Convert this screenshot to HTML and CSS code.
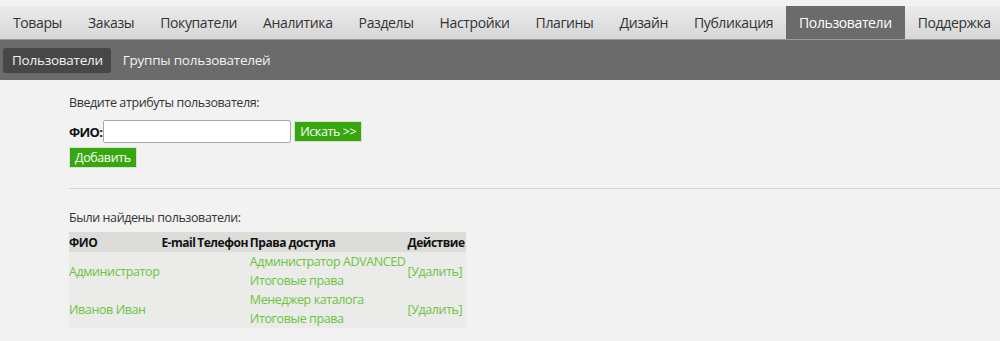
FILE: index.html
```html
<!DOCTYPE html>
<html lang="ru">
<head>
    <meta charset="UTF-8">
    <title>Пользователи</title>
    <link rel="stylesheet" href="styles.css">
</head>
<body>
    <div class="menu">
        <a class="menu-item">Товары</a>
        <a class="menu-item">Заказы</a>
        <a class="menu-item">Покупатели</a>
        <a class="menu-item">Аналитика</a>
        <a class="menu-item">Разделы</a>
        <a class="menu-item">Настройки</a>
        <a class="menu-item">Плагины</a>
        <a class="menu-item">Дизайн</a>
        <a class="menu-item">Публикация</a>
        <a class="menu-item active">Пользователи</a>
        <a class="menu-item">Поддержка</a>
    </div>
    <div class="submenu">
        <a class="submenu-item active">Пользователи</a>
        <a class="submenu-item">Группы пользователей</a>
    </div>

    <div class="content">
        <div class="search">
            <div class="hint">Введите атрибуты пользователя:</div>
            <div class="search-row">
                <label class="label">ФИО:</label>
                <input type="text" class="field">
                <button class="btn">Искать &gt;&gt;</button>
            </div>
            <button class="btn">Добавить</button>
        </div>

        <hr class="divider">

        <div class="hint">Были найдены пользователи:</div>
        <table class="users">
            <tr>
                <th class="col-name">ФИО</th>
                <th>E-mail</th>
                <th>Телефон</th>
                <th>Права доступа</th>
                <th>Действие</th>
            </tr>
            <tr>
                <td><a>Администратор</a></td>
                <td></td>
                <td></td>
                <td><a>Администратор ADVANCED</a><br><a>Итоговые права</a></td>
                <td><a>[Удалить]</a></td>
            </tr>
            <tr>
                <td><a>Иванов Иван</a></td>
                <td></td>
                <td></td>
                <td><a>Менеджер каталога</a><br><a>Итоговые права</a></td>
                <td><a>[Удалить]</a></td>
            </tr>
        </table>
    </div>
</body>
</html>
```
FILE: styles.css
```css
body {
    margin: 0;
    font-family: "Open Sans", "Noto Sans", sans-serif;
    background-color: #f3f2f2;
    color: #333;
    overflow: hidden;
}
.menu {
    display: flex;
    margin-top: 6px;
    height: 33px;
    background: linear-gradient(#ececec, #d6d6d6);
    border-bottom: 1px solid #9a9a9a;
    white-space: nowrap;
}
.menu-item {
    padding: 0 13px 0 13px;
    line-height: 33px;
    font-size: 14px;
    letter-spacing: -0.38px;
    color: #333;
    cursor: pointer;
}
.menu-item.active {
    background-color: #6b6b6b;
    color: #fff;
}
.submenu {
    display: flex;
    align-items: center;
    height: 40px;
    background-color: #6b6b6b;
    padding-left: 3px;
    gap: 3px;
}
.submenu-item {
    padding: 0 8px 0 9px;
    line-height: 25px;
    font-size: 13.5px;
    letter-spacing: -0.25px;
    color: #f2f2f2;
    border-radius: 3px;
    cursor: pointer;
}
.submenu-item.active {
    background-color: #474747;
}
.content {
    padding: 14px 0 0 69px;
    font-size: 12.5px;
    letter-spacing: -0.4px;
}
.hint {
    line-height: 18px;
}
.search-row {
    display: flex;
    align-items: center;
    margin-top: 8px;
}
.label {
    font-weight: bold;
    font-size: 13px;
    letter-spacing: -0.7px;
    color: #111;
    margin-right: 1px;
}
.field {
    width: 184px;
    height: 19px;
    padding: 1px;
    border: 1px solid #a9a9a9;
    border-radius: 2px;
    background: #fff;
    margin: 0 3px 0 0;
}
.btn {
    display: block;
    font-family: inherit;
    font-size: 12.5px;
    letter-spacing: -0.4px;
    color: #fff;
    background-color: #36a80d;
    border: 1px solid #dcdcdc;
    padding: 0 5px;
    height: 21px;
    line-height: 19px;
    cursor: pointer;
}
.search > .btn {
    margin-top: 4px;
}
.divider {
    border: none;
    border-top: 1px solid #d8d4d4;
    margin: 20px 0 20px 0;
}
.users {
    border-collapse: collapse;
    margin-top: 5px;
    background-color: #ebebea;
}
.users th {
    background-color: #dcdcd8;
    text-align: left;
    font-size: 12px;
    letter-spacing: -0.5px;
    color: #111;
    padding: 0 2px 0 0;
    height: 20px;
}
.users th:last-child,
.users td:last-child {
    padding-right: 1px;
}
.users .col-name {
    width: 89px;
}
.users td {
    padding: 0 2px 0 0;
    line-height: 19px;
    color: #6cc43c;
}
.users a {
    color: #6cc43c;
    cursor: pointer;
}
```
